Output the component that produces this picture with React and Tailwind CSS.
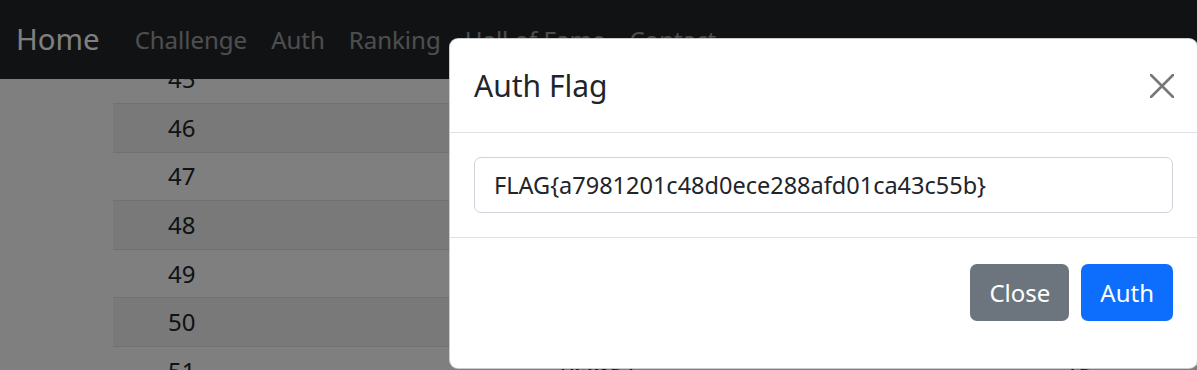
import React from 'react';

// Ranking table rows behind the modal (only the first column is really visible)
const rows = [45, 46, 47, 48, 49, 50, 51, 52];

function NavBar() {
  const links = ['Challenge', 'Auth', 'Ranking', 'Hall of Fame', 'Contact'];
  return (
    <nav className="h-[79px] bg-[#212529] flex items-center px-[16px] shrink-0">
      <a className="text-[29.4px] text-white mr-[23px] leading-none">Home</a>
      <div className="flex items-center">
        {links.map((l) => (
          <a key={l} className="px-[12px] text-[24px] text-white/55 leading-none">
            {l}
          </a>
        ))}
      </div>
    </nav>
  );
}

function RankTable() {
  return (
    <div className="flex-1 overflow-hidden pl-[113px]">
      <div className="-mt-[23.5px]">
        {rows.map((n, i) => (
          <div
            key={n}
            className={`h-[48.6px] flex items-center border-b border-[#dee2e6] text-[24px] text-[#212529] ${
              i % 2 === 1 ? 'bg-[#f2f2f2]' : 'bg-white'
            }`}
          >
            <span className="w-[447px] pl-[55px]">{n}</span>
            <span className="w-[505px]">user{n}</span>
            <span>15</span>
          </div>
        ))}
      </div>
    </div>
  );
}

function AuthModal() {
  return (
    <div className="absolute left-[449px] top-[38px] w-[749px] h-[331px] bg-white rounded-[9px] border border-black/20 flex flex-col">
      {/* Header */}
      <div className="h-[94px] flex items-center justify-between pl-[24px] pr-[23px] border-b border-[#dee2e6] shrink-0">
        <h5 className="text-[30px] text-[#212529] leading-none">Auth Flag</h5>
        <button className="w-[24px] h-[24px] flex items-center justify-center">
          <svg width="24" height="24" viewBox="0 0 24 24" fill="none">
            <path d="M1 1L23 23M23 1L1 23" stroke="#777" strokeWidth="2.6" strokeLinecap="round" />
          </svg>
        </button>
      </div>

      {/* Body */}
      <div className="px-[24px] py-[24px] border-b border-[#dee2e6] shrink-0">
        <input
          readOnly
          value="FLAG{a7981201c48d0ece288afd01ca43c55b}"
          className="w-full h-[56px] px-[19px] text-[23.5px] text-[#212529] border border-[#ced4da] rounded-[7px] outline-none bg-white"
        />
      </div>

      {/* Footer */}
      <div className="flex-1 flex justify-end items-start pt-[26px] pr-[24px] gap-[12px]">
        <button className="h-[57px] px-[19px] rounded-[7px] bg-[#6c757d] text-white text-[24px]">
          Close
        </button>
        <button className="h-[57px] px-[19px] rounded-[7px] bg-[#0d6efd] text-white text-[24px]">
          Auth
        </button>
      </div>
    </div>
  );
}

export default function App() {
  return (
    <div className="relative w-[1197px] h-[370px] overflow-hidden bg-white font-['Noto_Sans',sans-serif]">
      <div className="h-full flex flex-col">
        <NavBar />
        <RankTable />
      </div>
      {/* Backdrop */}
      <div className="absolute inset-0 bg-black/50" />
      <AuthModal />
    </div>
  );
}
